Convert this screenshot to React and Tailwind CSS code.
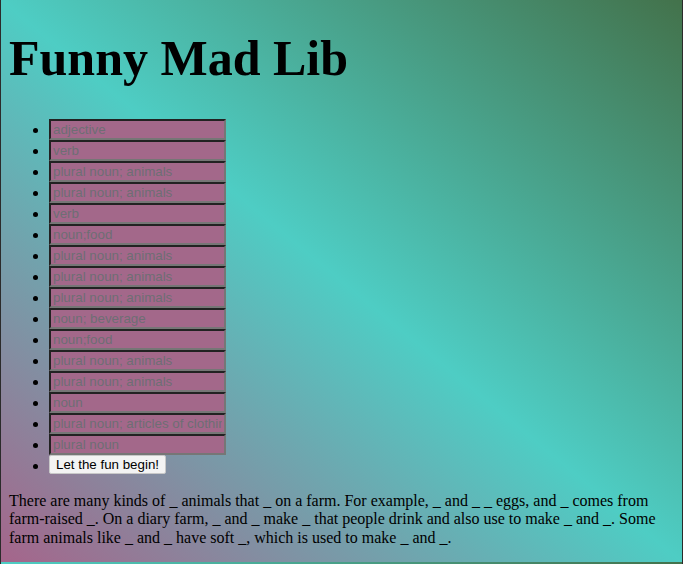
import React from "react";

const blanks = [
  "adjective",
  "verb",
  "plural noun; animals",
  "plural noun; animals",
  "verb",
  "noun;food",
  "plural noun; animals",
  "plural noun; animals",
  "plural noun; animals",
  "noun; beverage",
  "noun;food",
  "plural noun; animals",
  "plural noun; animals",
  "noun",
  "plural noun; articles of clothing",
  "plural noun",
];

const App = () => {
  return (
    <div
      className="min-h-[564px] border-x border-[#2b2b2b] px-[8px] bg-[linear-gradient(to_top_right,#a5658b,#4ecdc4,#43724b)] bg-[length:100%_562px] bg-repeat text-black"
      style={{ fontFamily: '"Liberation Serif", serif' }}
    >
      <h1 className="pt-[29px] text-[50px] leading-[58px] font-bold">Funny Mad Lib</h1>

      <ul className="mt-[32px] list-disc pl-[40px] text-[16px]">
        {blanks.map((b, i) => (
          <li key={i} className="h-[21px] leading-[21px]">
            <input
              type="text"
              placeholder={b}
              className="align-top w-[177px] h-[21px] px-[2px] py-[1px] border-2 border-t-[#222] border-l-[#222] border-b-[#767676] border-r-[#767676] bg-[#a3688a] text-[13.333px] placeholder:text-[#6e6e74] outline-none"
              style={{ fontFamily: '"Liberation Sans", Arial, sans-serif' }}
            />
          </li>
        ))}
        <li className="h-[21px] leading-[21px]">
          <button
            className="align-top h-[19px] px-[6px] border border-[#c8c8c8] rounded-[2px] bg-[#f3f3f3] text-[13.333px] leading-[15px]"
            style={{ fontFamily: '"Liberation Sans", Arial, sans-serif' }}
          >
            Let the fun begin!
          </button>
        </li>
      </ul>

      <p className="mt-[16px] text-[16px] leading-[18.4px]">
        There are many kinds of _ animals that _ on a farm. For example, _ and _ _ eggs, and _ comes from
        farm-raised _. On a diary farm, _ and _ make _ that people drink and also use to make _ and _. Some
        farm animals like _ and _ have soft _, which is used to make _ and _.
      </p>
    </div>
  );
};

export default App;
